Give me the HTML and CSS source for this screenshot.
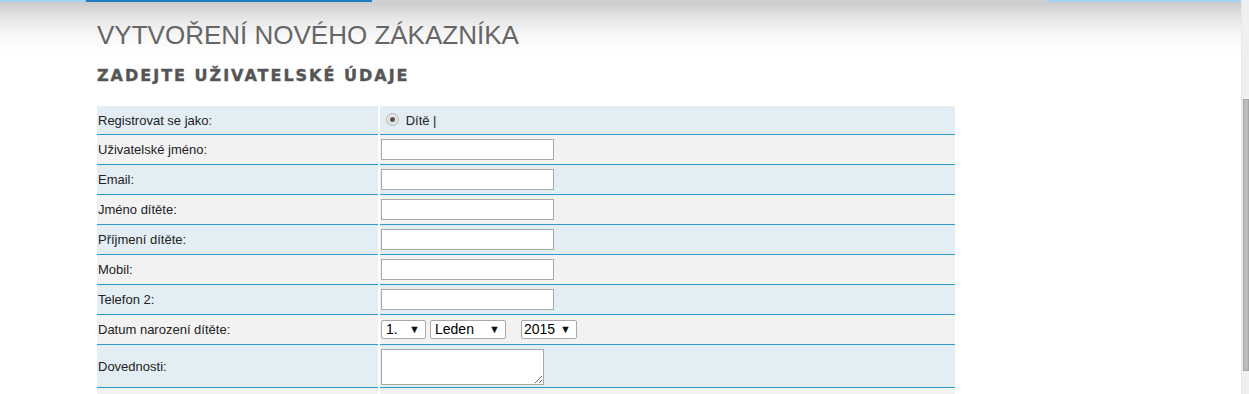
FILE: index.html
```html
<!DOCTYPE html>
<html lang="cs">
    <head>
        <meta charset="UTF-8">
        <meta name="viewport" content="width=device-width, initial-scale=1.0">
        <title>Vytvoření nového zákazníka</title>
        <link rel="stylesheet" href="styles.css">
    </head>
    <body>
        <div class="page">
            <div class="topbar">
                <span class="seg seg-light"></span>
                <span class="seg seg-dark"></span>
                <span class="seg seg-gray"></span>
                <span class="seg seg-end"></span>
            </div>

            <div class="content">
                <h1>Vytvoření nového zákazníka</h1>
                <h2>Zadejte uživatelské údaje</h2>

                <table class="form-table">
                    <tr class="odd first">
                        <td class="label">Registrovat se jako:</td>
                        <td class="field">
                            <span class="radio"><span class="dot"></span></span>
                            <span class="radio-label">Dítě |</span>
                        </td>
                    </tr>
                    <tr class="even">
                        <td class="label">Uživatelské jméno:</td>
                        <td class="field"><input type="text"></td>
                    </tr>
                    <tr class="odd">
                        <td class="label">Email:</td>
                        <td class="field"><input type="text"></td>
                    </tr>
                    <tr class="even">
                        <td class="label">Jméno dítěte:</td>
                        <td class="field"><input type="text"></td>
                    </tr>
                    <tr class="odd">
                        <td class="label">Příjmení dítěte:</td>
                        <td class="field"><input type="text"></td>
                    </tr>
                    <tr class="even">
                        <td class="label">Mobil:</td>
                        <td class="field"><input type="text"></td>
                    </tr>
                    <tr class="odd">
                        <td class="label">Telefon 2:</td>
                        <td class="field"><input type="text"></td>
                    </tr>
                    <tr class="even">
                        <td class="label">Datum narození dítěte:</td>
                        <td class="field">
                            <div class="date">
                                <span class="select sel-day">1.</span>
                                <span class="select sel-month">Leden</span>
                                <span class="select sel-year">2015</span>
                            </div>
                        </td>
                    </tr>
                    <tr class="odd tall">
                        <td class="label">Dovednosti:</td>
                        <td class="field"><textarea></textarea></td>
                    </tr>
                    <tr class="even">
                        <td class="label"></td>
                        <td class="field"></td>
                    </tr>
                </table>
            </div>
        </div>

        <!-- fake scrollbar -->
        <div class="scrollbar">
            <div class="thumb"></div>
        </div>
    </body>
</html>
```

FILE: styles.css
```css
html, body { margin: 0; padding: 0; height: 394px; overflow: hidden; }
body { display: flex; font-family: 'Liberation Sans', Arial, sans-serif; color: #222; background: #fff; }

.page { flex: 1; background: linear-gradient(#c8c8c8 0, #e6e6e6 18px, #f8f8f8 36px, #fff 52px); overflow: hidden; }

.topbar { display: flex; height: 2px; }
.seg { display: block; height: 2px; }
.seg-light { width: 86px; background: #a3d3f2; }
.seg-dark { width: 286px; background: #1b7ec2; }
.seg-gray { width: 675px; background: #d0d0d0; }
.seg-end { flex: 1; background: #a3d3f2; }

.content { margin-left: 97px; width: 860px; }

h1 { margin: 18px 0 0; font-size: 26px; line-height: 30px; font-weight: normal; color: #666; text-transform: uppercase; letter-spacing: 0; }
h2 { margin: 16px 0 0; font-family: 'DejaVu Sans', 'Liberation Sans', sans-serif; font-size: 16px; line-height: 20px; font-weight: bold; color: #555; text-transform: uppercase; letter-spacing: 2px; -webkit-text-stroke: 0.4px #555; }

.form-table { margin: 20px 0 0 -2px; border-collapse: separate; border-spacing: 2px 0; font-size: 13px; }
.form-table td { box-sizing: border-box; height: 30px; padding: 0 1px; border-bottom: 1px solid #3399cc; vertical-align: middle; }
.form-table tr.first td { height: 29px; }
.form-table tr.tall td { height: 43px; }
.form-table .label { width: 281px; }
.form-table .field { width: 575px; }
.odd td { background: #e2eef4; }
.even td { background: #f2f2f2; }

.field input { box-sizing: border-box; width: 173px; height: 21px; margin: 0; border: 1px solid #a9a9a9; background: #fff; display: block; }
.field textarea { box-sizing: border-box; width: 163px; height: 36px; margin: 1px 0 0; border: 1px solid #a9a9a9; background: #fff; display: block; resize: both; }

.radio { display: inline-block; vertical-align: middle; width: 11px; height: 11px; margin: 0 3px 0 5px; border-radius: 50%; background: radial-gradient(#f4f4f4, #d6d6d6); border: 1px solid #b8b8b8; position: relative; top: -1px; }
.radio .dot { position: absolute; left: 3px; top: 3px; width: 5px; height: 5px; border-radius: 50%; background: #555; }
.radio-label { vertical-align: middle; }

.date { display: flex; align-items: center; }
.select { display: block; box-sizing: border-box; height: 19px; line-height: 17px; padding-left: 4px; border: 1px solid #a9a9a9; border-radius: 2px; background: #fff; font-size: 14px; color: #000; position: relative; }
.select::after { content: "\25BC"; position: absolute; right: 5px; top: 0; font-size: 11px; color: #111; }
.sel-day { width: 45px; }
.sel-month { width: 76px; margin-left: 4px; }
.sel-year { width: 56px; margin-left: 15px; padding-left: 2px; }

.scrollbar { width: 8px; height: 394px; background: #f0f0f0; border-left: 1px solid #e8e8e8; box-sizing: border-box; }
.thumb { margin: 99px 0 0 1px; width: 6px; height: 272px; box-sizing: border-box; background: #bcbcbc; border: 1px solid #a6a6a6; }
```
